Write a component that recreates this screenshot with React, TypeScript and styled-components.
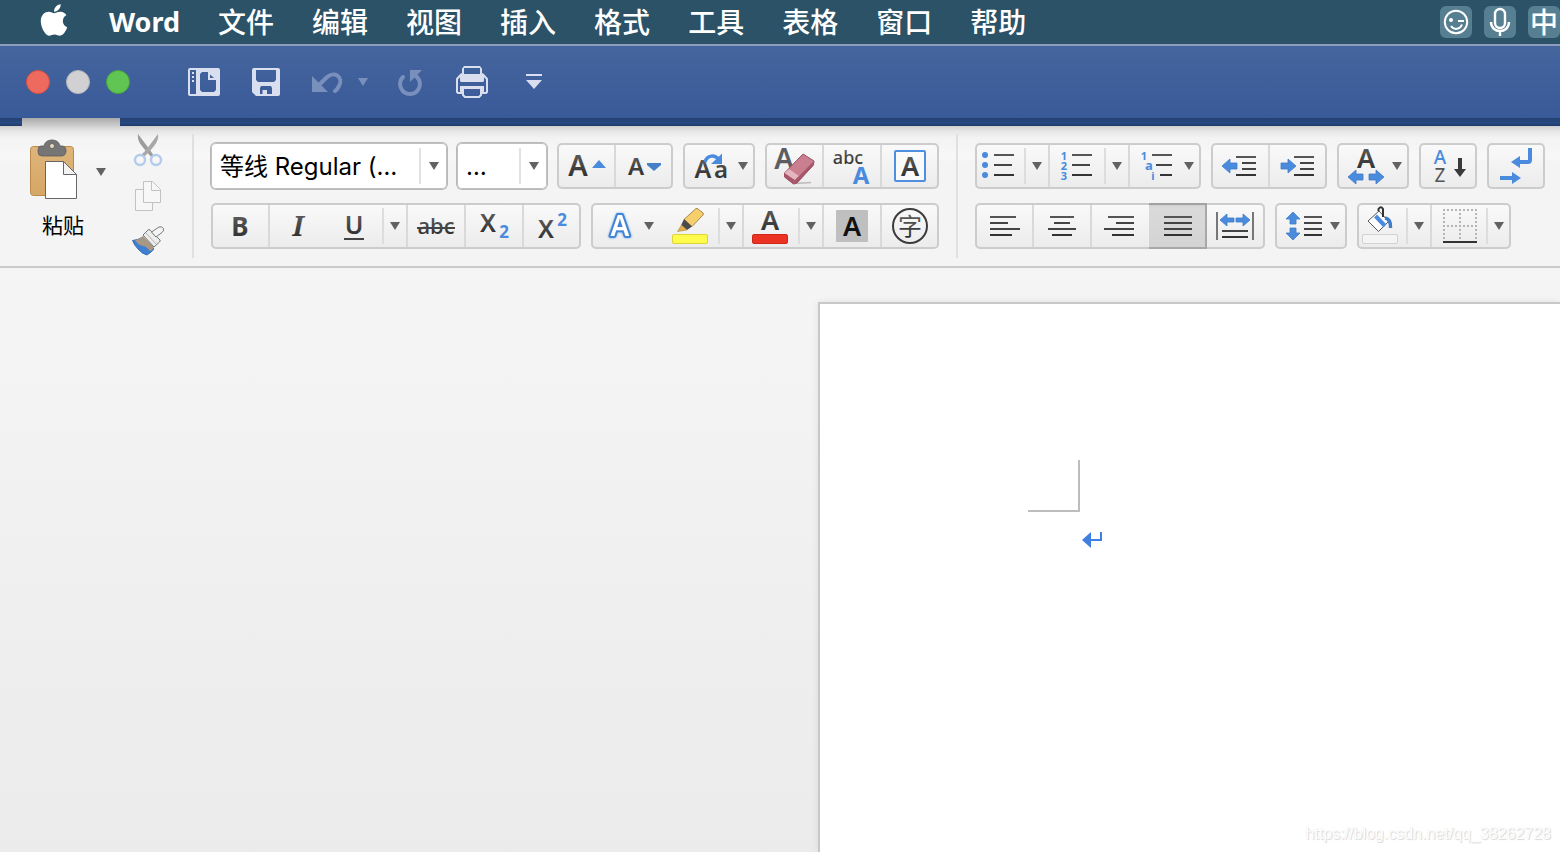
import React from "react";
import styled, { createGlobalStyle, css } from "styled-components";
import { FaApple } from "react-icons/fa";

const BLUE = "#4a8bdd";
const INK = "#444444";
const UI = `"Noto Sans", "Noto Sans CJK SC", sans-serif`;

const GlobalStyle = createGlobalStyle`
  *, *::before, *::after { box-sizing: border-box; }
  body { margin: 0; font-family: ${UI}; overflow: hidden; }
  button, select { font: inherit; color: inherit; margin: 0; padding: 0; border: 0; background: none; }
  svg { display: block; flex: none; overflow: visible; }
  svg text { font-family: ${UI}; }
`;

const Screen = styled.div`
  min-height: 100vh;
  display: flex;
  flex-direction: column;
`;

/* ---------- system menu bar ---------- */

const MenuBar = styled.nav`
  height: 44px;
  flex: none;
  display: flex;
  align-items: center;
  justify-content: space-between;
  background: #2b5266;
  color: #fff;
`;

const MenuList = styled.div`
  display: flex;
  align-items: center;
  gap: 38px;
  padding-left: 37px;
`;

const MenuLink = styled.a<{ $bold?: boolean }>`
  color: #fff;
  text-decoration: none;
  white-space: nowrap;
  font-size: ${(p) => (p.$bold ? 27 : 28)}px;
  font-weight: ${(p) => (p.$bold ? 700 : 500)};
  line-height: 44px;
`;

const AppleLink = styled.a`
  display: flex;
  justify-content: center;
  width: 34px;
  padding-bottom: 4px;
  color: #fff;
`;

const StatusList = styled.div`
  display: flex;
  gap: 12px;
`;

const StatusItem = styled.button`
  width: 32px;
  height: 32px;
  display: flex;
  align-items: center;
  justify-content: center;
  border-radius: 6px;
  background: #577f92;
  color: #fff;
  font-size: 28px;
  font-weight: 500;
  line-height: 32px;
`;

/* ---------- window title bar ---------- */

const TitleBar = styled.header`
  height: 74px;
  flex: none;
  display: flex;
  align-items: center;
  padding-left: 26px;
  border-top: 2px solid #8c9dbd;
  background: linear-gradient(#44659d, #395a98);
`;

const Lights = styled.div`
  display: flex;
  gap: 16px;
  margin-right: 58px;
`;

const Light = styled.button<{ $fill: string; $edge: string }>`
  width: 24px;
  height: 24px;
  border-radius: 50%;
  background: ${(p) => p.$fill};
  border: 1px solid ${(p) => p.$edge};
`;

const QuickTools = styled.div`
  display: flex;
  align-items: center;
  gap: 30px;
`;

const QuickButton = styled.button`
  display: flex;
  align-items: center;
  color: #d9dfee;
  &:disabled { color: #7a90bc; }
`;

const UndoPair = styled.div`
  display: flex;
  align-items: center;
  gap: 13px;
  margin-right: -5px;
`;

const TabStrip = styled.div`
  height: 8px;
  flex: none;
  padding-left: 22px;
  background: linear-gradient(#23406f, #284a83 60%, #213c6c);
`;

const ActiveTab = styled.div`
  width: 98px;
  height: 8px;
  background: linear-gradient(#a9a9a9, #cfcfcf);
`;

/* ---------- ribbon ---------- */

const Ribbon = styled.div`
  flex: none;
  display: flex;
  padding: 8px 0;
  border-bottom: 2px solid #cbcbcb;
  background: linear-gradient(#cfcfcf, #e6e6e6 5px, #f3f3f3 12px, #f8f8f8 32px, #f4f4f4 36px, #f4f4f4);
`;

const Clipboard = styled.section`
  display: flex;
  align-items: flex-start;
  padding: 0 28px;
`;

const PasteButton = styled.button`
  width: 56px;
  display: flex;
  flex-direction: column;
  gap: 12px;
  padding-top: 4px;
`;

const PasteLabel = styled.span`
  padding-left: 14px;
  white-space: nowrap;
  font-size: 21px;
  line-height: 26px;
  color: #000;
`;

const PasteMenu = styled.button`
  margin: 34px 26px 0 12px;
`;

const SmallTools = styled.div`
  display: flex;
  flex-direction: column;
  gap: 14px;
`;

const PlainButton = styled.button`
  display: block;
`;

const Section = styled.section`
  display: flex;
  flex-direction: column;
  gap: 14px;
  padding: 9px 17px;
  border-left: 2px solid #e0e0e0;
`;

const Row = styled.div`
  display: flex;
  gap: 10px;
`;

const Group = styled.div`
  display: flex;
  height: 46px;
  border-radius: 5px;
  background: linear-gradient(#fafafa, #ebebeb);
  box-shadow: inset 0 0 0 2px #cccccc;
`;

const Tool = styled.button<{ $w: number; $active?: boolean }>`
  position: relative;
  width: ${(p) => p.$w}px;
  height: 46px;
  flex: none;
  color: ${INK};
  & + &::before {
    content: "";
    position: absolute;
    left: -1px;
    top: 2px;
    bottom: 2px;
    width: 2px;
    background: #d9d9d9;
  }
  ${(p) =>
    p.$active &&
    css`
      background: linear-gradient(#cbcbcb, #dadada 5px, #d3d3d3);
      box-shadow: inset 0 2px #a3a3a3, inset 0 -2px #a8a8a8, inset -2px 0 #a8a8a8;
    `}
`;

const MenuTool = styled.button`
  position: relative;
  width: 24px;
  height: 46px;
  display: flex;
  align-items: center;
  justify-content: center;
  & + ${Tool}::before {
    content: "";
    position: absolute;
    left: -1px;
    top: 2px;
    bottom: 2px;
    width: 2px;
    background: #d9d9d9;
  }
  &::before {
    content: "";
    position: absolute;
    left: -1px;
    top: 5px;
    bottom: 5px;
    width: 2px;
    background: #dddddd;
  }
`;

const Combo = styled.label<{ $w: number }>`
  position: relative;
  display: block;
  width: ${(p) => p.$w}px;
  height: 46px;
  border-radius: 5px;
  background: #fff;
  box-shadow: inset 0 0 0 1px #c0c0c0, 0 0 0 1px #b9b9b9;
`;

const ComboSelect = styled.select`
  appearance: none;
  width: 100%;
  height: 46px;
  padding: 0 28px 0 9px;
  font-family: Inter, "Noto Sans CJK SC", sans-serif;
  font-size: 24px;
  color: #000;
  outline: none;
`;

const ComboArrow = styled.span`
  position: absolute;
  right: 0;
  top: 5px;
  width: 28px;
  height: 36px;
  display: flex;
  align-items: center;
  justify-content: center;
  border-left: 2px solid #e2e2e2;
  pointer-events: none;
`;

/* ---------- document area ---------- */

const Workspace = styled.main`
  position: relative;
  flex: 1;
  display: grid;
  grid-template-columns: 818fr 742fr;
  padding-top: 34px;
  background: linear-gradient(#f5f5f5, #ebebeb);
`;

const Paper = styled.article`
  grid-column: 2;
  padding: 156px 0 0 208px;
  border-top: 2px solid #c8c8c8;
  border-left: 2px solid #c8c8c8;
  background: #fff;
  box-shadow: 0 0 8px rgba(0, 0, 0, 0.08);
`;

const MarginCorner = styled.div`
  width: 52px;
  height: 52px;
  border: solid #bdbdbd;
  border-width: 0 2px 2px 0;
`;

const Paragraph = styled.p`
  margin: 17px 0 0;
  padding-left: 54px;
`;

const Watermark = styled.span`
  position: absolute;
  right: 9px;
  bottom: 8px;
  font-family: "Liberation Sans", sans-serif;
  font-size: 16px;
  line-height: 20px;
  color: #fff;
  text-shadow: 1px 1px 1px #d6d6d6, 0 0 1px #e4e4e4;
`;

/* ---------- icon helpers ---------- */

const Caret = ({ color = "#626262" }: { color?: string }) => (
  <svg width="10" height="8" viewBox="0 0 10 8"><path d="M0 0H10L5 8Z" fill={color} /></svg>
);

const Art = ({ w = 58, children }: { w?: number; children: React.ReactNode }) => (
  <svg width={w} height="46" viewBox={`0 0 ${w} 46`} fill="none" aria-hidden="true">
    <defs>
      <linearGradient id="ink" x1="0" y1="0" x2="0" y2="1">
        <stop offset="0.2" stopColor="#5c5c5c" />
        <stop offset="0.85" stopColor="#2e2e2e" />
      </linearGradient>
    </defs>
    {children}
  </svg>
);

type GlyphProps = { x: number; y: number; size: number; weight?: number; fill?: string; children: React.ReactNode };
const Glyph = ({ x, y, size, weight = 600, fill = "url(#ink)", children }: GlyphProps) => (
  <text x={x} y={y} fontSize={size} fontWeight={weight} fill={fill} textAnchor="middle">{children}</text>
);

const GlowLetter = styled.text`
  font-size: 28px;
  font-weight: 600;
  fill: #fff;
  stroke: #4384d6;
  stroke-width: 4px;
  stroke-linejoin: round;
  paint-order: stroke;
  text-anchor: middle;
  filter: drop-shadow(0 0 1px #6fa8ee);
`;

const SerifLetter = styled.text`
  && { font-family: "Noto Serif", "Liberation Serif", serif; }
  font-size: 27px;
  font-style: italic;
  font-weight: 700;
  text-anchor: middle;
`;

const Lines = ({ items }: { items: number[][] }) => (
  <>
    {items.map(([y, a, b]) => (
      <path key={y} d={`M${a} ${y}H${b}`} stroke={y < 20 ? "#555" : y < 30 ? "#444" : "#333"} strokeWidth="2" />
    ))}
  </>
);

const DropMark = ({ x = 60 }: { x?: number }) => <path d={`M${x - 5} 19h10l-5 8z`} fill="#626262" />;

/* Horizontal arrow from its tip; dir is -1 for left, 1 for right. */
const Arrow = ({ x, y, dir, len = 15, half = 7, head = 8, stem = 3 }: { x: number; y: number; dir: number; len?: number; half?: number; head?: number; stem?: number }) => (
  <path
    d={`M${x} ${y}L${x - dir * head} ${y - half}V${y - stem}H${x - dir * len}V${y + stem}H${x - dir * head}V${y + half}Z`}
    fill={BLUE} stroke="#3f7ccb" strokeWidth="0.8" strokeLinejoin="round"
  />
);

const S = (label: string, w: number, art: React.ReactNode, active?: boolean) => (
  <Tool $w={w} $active={active} aria-label={label} aria-pressed={active}><Art w={w}>{art}</Art></Tool>
);

const More = ({ label }: { label: string }) => <MenuTool aria-label={label}><Caret /></MenuTool>;

const menus = ["文件", "编辑", "视图", "插入", "格式", "工具", "表格", "窗口", "帮助"];

export default function App() {
  return (
    <Screen>
      <GlobalStyle />
      <MenuBar>
        <MenuList>
          <AppleLink href="#apple" aria-label="Apple"><FaApple size={36} /></AppleLink>
          <MenuLink $bold href="#word">Word</MenuLink>
          {menus.map((m) => <MenuLink key={m} href={`#${m}`}>{m}</MenuLink>)}
        </MenuList>
        <StatusList>
          <StatusItem aria-label="表情">
            <svg width="32" height="32" viewBox="0 0 32 32" fill="none" stroke="#fff" strokeWidth="2">
              <circle cx="16" cy="16" r="11.2" />
              <circle cx="11" cy="14" r="2" fill="#fff" stroke="none" />
              <path d="M18 15h6M11 20c3 4.500 9 3.500 11-1.500" />
            </svg>
          </StatusItem>
          <StatusItem aria-label="语音">
            <svg width="32" height="32" viewBox="0 0 32 32" fill="none" stroke="#fff" strokeWidth="2.400">
              <rect x="11" y="3" width="10" height="19" rx="5" />
              <path d="M7 16c0 12 18 12 18 0M16 25v5" />
            </svg>
          </StatusItem>
          <StatusItem>中</StatusItem>
        </StatusList>
      </MenuBar>

      <TitleBar>
        <Lights>
          <Light $fill="#ee6a5f" $edge="#d8503f" aria-label="关闭" />
          <Light $fill="#d1d0d2" $edge="#b5b5b8" aria-label="最小化" />
          <Light $fill="#61c554" $edge="#46a33a" aria-label="缩放" />
        </Lights>
        <QuickTools>
          <QuickButton aria-label="侧栏">
            <svg width="32" height="32" viewBox="0 0 32 32">
              <path fill="currentColor" fillRule="evenodd" d="M2 2H30a2 2 0 0 1 2 2V28a2 2 0 0 1-2 2H2a2 2 0 0 1-2-2V4a2 2 0 0 1 2-2ZM2 4V28H8V4ZM14 6L12 8V24L14 26H26L28 24V13.500L21 6Z" />
              <path fill="currentColor" d="M4 6h2v2H4zM4 10h2v2H4zM4 14h2v2H4zM20 6h2l6 6v2h-8z" />
              <path fill="#3f6099" d="M22 8.500V12h4z" />
            </svg>
          </QuickButton>
          <QuickButton aria-label="保存">
            <svg width="32" height="32" viewBox="0 0 32 32">
              <path fill="currentColor" fillRule="evenodd" d="M4 2H28a2 2 0 0 1 2 2V28a2 2 0 0 1-2 2H6l-4-4V4a2 2 0 0 1 2-2ZM6 4V14l2 2H24l2-2V4ZM10 22V28H12.500V24H17V28H22V22l-1-2H11Z" />
            </svg>
          </QuickButton>
          <UndoPair>
            <QuickButton aria-label="撤消" disabled>
              <svg width="32" height="32" viewBox="0 0 32 32">
                <path fill="currentColor" d="M0 10V26H16Z" />
                <path fill="none" stroke="currentColor" strokeWidth="4" d="M8 18L14 12C22 4 32 11 27 20C26 22 25 24 23 25" strokeLinecap="round" />
              </svg>
            </QuickButton>
            <QuickButton aria-label="撤消列表" disabled>
              <svg width="12" height="8" viewBox="0 0 12 8"><path d="M1 0H11L6 8Z" fill="currentColor" /></svg>
            </QuickButton>
          </UndoPair>
          <QuickButton aria-label="重复" disabled>
            <svg width="32" height="32" viewBox="0 0 32 32">
              <path fill="currentColor" d="M16 4H28L16 16Z" />
              <path fill="none" stroke="currentColor" strokeWidth="4" strokeLinecap="round" d="M9 11C3 17 7 28 16 28C25 28 29 17 23 11L21 9" />
            </svg>
          </QuickButton>
          <QuickButton aria-label="打印">
            <svg width="32" height="32" viewBox="0 0 32 32" fill="none" stroke="currentColor" strokeWidth="2">
              <path d="M7 10V3L8.500 1H23.500L25 3V10" />
              <path d="M4 8L6 7H26L28 8V15L27 16H5L4 15Z" fill="currentColor" stroke="none" />
              <path d="M8 2H24V8H8Z" fill="#3f6199" stroke="none" />
              <path d="M5 8.500L1 13V26L2 27H6M27 8.500L31 13V26L30 27H26" />
              <path d="M4 21.500H28" strokeWidth="3" />
              <path d="M5 26V22M27 26V22" />
              <path d="M7 22V29L9 31H23L25 29V22" />
            </svg>
          </QuickButton>
          <QuickButton aria-label="自定义工具栏">
            <svg width="32" height="32" viewBox="0 0 32 32" fill="currentColor">
              <path d="M8 8H24V10H8ZM8 14H24L16 23Z" />
            </svg>
          </QuickButton>
        </QuickTools>
      </TitleBar>
      <TabStrip><ActiveTab /></TabStrip>

      <Ribbon>
        <Clipboard>
          <PasteButton>
            <svg width="52" height="62" viewBox="0 0 52 62">
              <defs>
                <linearGradient id="board" x1="0" y1="0" x2="0" y2="1"><stop stopColor="#dfb57c" /><stop offset="1" stopColor="#d5a765" /></linearGradient>
              </defs>
              <rect x="2.500" y="8.500" width="43" height="49" rx="3" fill="url(#board)" stroke="#b98a4a" />
              <path d="M13 8H16C17 0 31 0 32 8H35Q38 9 38 12V14Q37 18 34 18H14Q10 18 10 14V12Q10 8 13 8Z" fill="#757575" stroke="#5e5e5e" strokeWidth="0.800" />
              <circle cx="24" cy="8" r="2.500" fill="#e9d9bf" stroke="#555" strokeWidth="0.800" />
              <path d="M17.500 23.500H35.500L48.500 36.500V60.500H17.500Z" fill="#fff" stroke="#666" />
              <path d="M35.500 23.500V36.500H48.500Z" fill="#f3f3f3" stroke="#666" />
            </svg>
            <PasteLabel>粘贴</PasteLabel>
          </PasteButton>
          <PasteMenu aria-label="粘贴选项"><Caret /></PasteMenu>
          <SmallTools>
            <PlainButton aria-label="剪切">
              <svg width="32" height="32" viewBox="0 0 32 32" fill="none">
                <path d="M6 0L18 16L22 22L19 23L14 17C9 11 5 7 6 0Z" fill="#9c9c9c" />
                <path d="M26 0L14 16L9 21L12 23L18 17C23 11 27 7 26 0Z" fill="#a8a8a8" />
                <circle cx="8" cy="26" r="5" stroke="#b3cbec" strokeWidth="2.400" />
                <circle cx="24" cy="26" r="5" stroke="#b3cbec" strokeWidth="2.400" />
              </svg>
            </PlainButton>
            <PlainButton aria-label="复制">
              <svg width="32" height="32" viewBox="0 0 32 32" fill="#f7f7f7" stroke="#c2c2c2">
                <path d="M3.500 9.500H20.500V30.500H3.500Z" />
                <path d="M11.500 1.500H20.500L28.500 9.500V22.500H11.500Z" />
                <path d="M19.500 1.500V10.500H28.500" fill="none" />
              </svg>
            </PlainButton>
            <PlainButton aria-label="格式刷">
              <svg width="32" height="32" viewBox="0 0 32 32" strokeLinejoin="round">
                <path d="M0.500 14.500Q6 14 11 11L22 23Q20 26 15 29Q10 28 6 23Q2 19 0.500 14.500Z" fill="#3f7fd0" stroke="#2f62a8" strokeWidth="0.800" />
                <path d="M3 14Q8 13 11 10L22 21Q21 24 18 25Q14 20 11 20Q6 19 3 14Z" fill="#a89784" />
                <path d="M11 9L16 4Q17 3 18 4L28 14Q28.500 15 27.500 16L22 21Z" fill="#ececec" stroke="#777" />
                <path d="M14 7L24 18" stroke="#b5b5b5" />
                <path d="M19.500 6L27 1Q30 0 31.500 2.500Q32 5 30 6.500L24 11Z" fill="#f4f4f4" stroke="#777" />
              </svg>
            </PlainButton>
          </SmallTools>
        </Clipboard>

        <Section>
          <Row>
            <Combo $w={236}>
              <ComboSelect aria-label="字体"><option>等线 Regular (…</option></ComboSelect>
              <ComboArrow><Caret /></ComboArrow>
            </Combo>
            <Combo $w={90}>
              <ComboSelect aria-label="字号"><option>…</option></ComboSelect>
              <ComboArrow><Caret /></ComboArrow>
            </Combo>
            <Group>
              {S("增大字号", 58, <><Glyph x={21} y={33} size={29}>A</Glyph><path d="M35 25L42 17L49 25Z" fill={BLUE} /></>)}
              {S("减小字号", 58, <><Glyph x={21} y={32} size={24}>A</Glyph><path d="M32 20H46V22L39 28L32 22Z" fill="#4880c8" /></>)}
            </Group>
            <Group>
              {S("更改大小写", 72, <>
                <Glyph x={20} y={35} size={25}>A</Glyph><Glyph x={38} y={35} size={24}>a</Glyph>
                <path d="M22 19C24 12 32 11 36 17" stroke={BLUE} strokeWidth="3.500" />
                <path d="M39 10.500V21H28Z" fill={BLUE} /><DropMark />
              </>)}
            </Group>
            <Group>
              {S("清除格式", 58, <>
                <Glyph x={19} y={26} size={29} fill="#5c5d62">A</Glyph>
                <path d="M30 40.500L46 39.500" stroke="#bbb" strokeWidth="1.500" />
                <path d="M38 11L49 18L48.500 22L32 40L28.500 41L19.500 34V30Z" fill="#c97f90" stroke="#9c5163" strokeLinejoin="round" />
                <path d="M19.500 30L30 37L28.500 41L19.500 34Z" fill="#a65669" />
                <path d="M24 26L34 33L30 37L19.500 30Z" fill="#e3b5be" />
                <path d="M30 37L48.500 18.500L48.500 22L32 40L28.500 41Z" fill="#a65669" />
              </>)}
              {S("拼音指南", 58, <><Glyph x={25} y={21} size={18} weight={500}>abc</Glyph><Glyph x={38} y={41} size={24} weight={700} fill={BLUE}>A</Glyph></>)}
              {S("字符边框", 58, <><rect x="14" y="8" width="30" height="30" rx="1" stroke="#4f8fe0" strokeWidth="2" fill="#fafafa" /><Glyph x={29} y={33} size={27}>A</Glyph></>)}
            </Group>
          </Row>
          <Row>
            <Group>
              {S("加粗", 58, <Glyph x={29} y={33} size={26} weight={700}>B</Glyph>)}
              {S("倾斜", 58, <SerifLetter x="29" y="33" fill="url(#ink)">I</SerifLetter>)}
              {S("下划线", 56, <><Glyph x={27} y={31} size={25}>U</Glyph><path d="M17 36H37" stroke="#444" strokeWidth="2" /></>)}
              <More label="下划线样式" />
              {S("删除线", 58, <><Glyph x={29} y={31} size={22} weight={500}>abc</Glyph><path d="M10 25H48" stroke="#444" strokeWidth="2" /></>)}
              {S("下标", 58, <><Glyph x={23} y={29} size={25}>X</Glyph><Glyph x={39} y={35} size={17} weight={700} fill={BLUE}>2</Glyph></>)}
              {S("上标", 58, <><Glyph x={23} y={35} size={25}>X</Glyph><Glyph x={39} y={23} size={17} weight={700} fill={BLUE}>2</Glyph></>)}
            </Group>
            <Group>
              {S("文本效果", 72, <><GlowLetter x="29" y="33">A</GlowLetter><DropMark x={58} /></>)}
              {S("突出显示", 56, <>
                <rect x="9.500" y="31.500" width="35" height="9" rx="1.500" fill="#fffb4d" stroke="#dcd536" />
                <path d="M33 5.500Q34 5 35 6L40 10Q41 11 40 12L29 23.500L21 16.500Z" fill="#f6cf6c" stroke="#a98949" strokeLinejoin="round" />
                <path d="M21 16L29 23.500L24 27L18 22.500Z" fill="#4a4a4a" /><path d="M18.500 22L24 27L14.500 28.500Z" fill="#e2ae4c" stroke="#a98949" strokeWidth="0.600" />
              </>)}
              <More label="突出显示颜色" />
              {S("字体颜色", 56, <><rect x="9.500" y="31.500" width="35" height="9" rx="1.500" fill="#ec3323" stroke="#cf2718" /><Glyph x={27} y={27} size={27}>A</Glyph></>)}
              <More label="字体颜色列表" />
              {S("字符底纹", 58, <><rect x="13" y="7" width="32" height="32" rx="1" fill="#bfbfbf" /><Glyph x={29} y={33} size={27} fill="#111">A</Glyph></>)}
              {S("带圈字符", 58, <><circle cx="29" cy="23" r="17" stroke="#3c3c3c" strokeWidth="2" /><Glyph x={29} y={32} size={24} weight={400}>字</Glyph></>)}
            </Group>
          </Row>
        </Section>

        <Section>
          <Row>
            <Group>
              {S("项目符号", 50, <>
                {[12, 22, 32].map((y) => <circle key={y} cx="10" cy={y} r="3" fill={BLUE} />)}
                <Lines items={[[12, 19, 39], [22, 19, 37], [32, 19, 39]]} />
              </>)}
              <More label="项目符号库" />
              {S("编号", 56, <>
                {["1", "2", "3"].map((n, i) => <Glyph key={n} x={15} y={17 + i * 10} size={11} weight={700} fill={BLUE}>{n}</Glyph>)}
                <Lines items={[[12, 23, 43], [22, 23, 41], [32, 23, 43]]} />
              </>)}
              <More label="编号库" />
              {S("多级列表", 72, <>
                <Glyph x={15} y={17} size={11} weight={700} fill={BLUE}>1</Glyph>
                <Glyph x={20} y={27} size={13} weight={700} fill={BLUE}>a</Glyph>
                <Glyph x={24} y={37} size={11} weight={700} fill={BLUE}>i</Glyph>
                <Lines items={[[12, 23, 43], [22, 27, 43], [32, 31, 43]]} /><DropMark />
              </>)}
            </Group>
            <Group>
              {S("减少缩进", 58, <><Arrow x={11} y={23} dir={-1} /><Lines items={[[14, 25, 45], [20, 31, 45], [26, 31, 45], [32, 25, 45]]} /></>)}
              {S("增加缩进", 58, <><Arrow x={27} y={23} dir={1} /><Lines items={[[14, 25, 45], [20, 31, 45], [26, 31, 45], [32, 25, 45]]} /></>)}
            </Group>
            <Group>
              {S("中文版式", 72, <><Glyph x={29} y={25} size={27}>A</Glyph><Arrow x={11} y={34} dir={-1} /><Arrow x={47} y={34} dir={1} /><DropMark /></>)}
            </Group>
            <Group>
              {S("排序", 58, <>
                <Glyph x={21} y={21} size={19} weight={500} fill={BLUE}>A</Glyph><Glyph x={21} y={39} size={19} weight={400} fill="#555">Z</Glyph>
                <path d="M39 15H43V26H47L41 34L35 26H39Z" fill="#3a3a3a" />
              </>)}
            </Group>
            <Group>
              {S("显示编辑标记", 58, <>
                <path d="M43 5V17Q43 19 41 19H31" stroke={BLUE} strokeWidth="4" />
                <path d="M24 19L33 13V25Z" fill={BLUE} /><path d="M13 35H26" stroke={BLUE} strokeWidth="4" /><path d="M34 35L25 29V41Z" fill={BLUE} />
              </>)}
            </Group>
          </Row>
          <Row>
            <Group>
              {S("左对齐", 58, <Lines items={[[14, 15, 41], [20, 15, 33], [26, 15, 45], [32, 15, 37]]} />)}
              {S("居中", 58, <Lines items={[[14, 17, 41], [20, 21, 37], [26, 15, 43], [32, 19, 39]]} />)}
              {S("右对齐", 58, <Lines items={[[14, 17, 43], [20, 25, 43], [26, 13, 43], [32, 21, 43]]} />)}
              {S("两端对齐", 58, <Lines items={[[14, 15, 43], [20, 15, 43], [26, 15, 43], [32, 15, 43]]} />, true)}
              {S("分散对齐", 58, <>
                <path d="M10 9V37M46 9V37" stroke="#777" strokeWidth="2" />
                <Arrow x={13} y={17} dir={-1} len={14} half={6} head={7} stem={2} /><Arrow x={43} y={17} dir={1} len={14} half={6} head={7} stem={2} />
                <Lines items={[[28, 15, 41], [34, 15, 41]]} />
              </>)}
            </Group>
            <Group>
              {S("行距", 72, <>
                <path d="M18 9L25 16H21V21H15V16H11ZM18 37L25 30H21V25H15V30H11Z" fill={BLUE} stroke="#3f7ccb" strokeWidth="0.800" strokeLinejoin="round" />
                <Lines items={[[14, 29, 47], [20, 29, 47], [26, 29, 47], [32, 29, 47]]} /><DropMark />
              </>)}
            </Group>
            <Group>
              {S("底纹", 50, <>
                <rect x="5.500" y="31.500" width="35" height="9" rx="1.500" fill="#f4f4f4" stroke="#d2d2d2" />
                <path d="M11 18L22 8L31.500 18.500L21.500 28.500Z" fill="#fff" stroke="#555" />
                <path d="M18.500 13L28 23" stroke={BLUE} strokeWidth="4" />
                <path d="M21.500 8V6Q24 2.500 26 6V14" stroke="#333" strokeWidth="2" />
                <path d="M28 15Q34 16 33.500 25" stroke="#3f7ccb" strokeWidth="3.500" />
              </>)}
              <More label="底纹颜色" />
              {S("边框", 56, <>
                <path d="M12 7H46M12 23H46" stroke="#b5b5b5" strokeWidth="2" strokeDasharray="2 2" />
                <path d="M13 6V36M29 6V36M45 6V36" stroke="#b5b5b5" strokeWidth="2" strokeDasharray="2 2" />
                <path d="M12 39H46" stroke="#333" strokeWidth="2" />
              </>)}
              <More label="边框样式" />
            </Group>
          </Row>
        </Section>
      </Ribbon>

      <Workspace>
        <Paper>
          <MarginCorner />
          <Paragraph>
            <svg width="22" height="20" viewBox="0 0 22 20">
              <path d="M0 11L9 3V19Z" fill="#3f7fe0" /><path d="M8 11H19V3" fill="none" stroke="#3f7fe0" strokeWidth="2" />
            </svg>
          </Paragraph>
        </Paper>
        <Watermark>https://blog.csdn.net/qq_38262728</Watermark>
      </Workspace>
    </Screen>
  );
}
